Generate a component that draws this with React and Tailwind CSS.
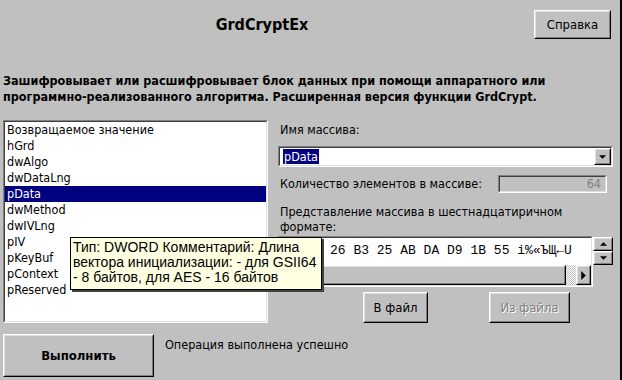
import React from 'react';

const ui = "font-['DejaVu_Sans_Condensed','DejaVu_Sans',sans-serif] font-stretch-condensed";

const raised = 'border border-t-white border-l-white border-b-black border-r-black';
const raisedInner = 'border border-t-[#dfdfdf] border-l-[#dfdfdf] border-b-[#808080] border-r-[#808080]';
const sunken = 'border border-t-[#808080] border-l-[#808080] border-b-white border-r-white';
const sunkenInner = 'border border-t-[#404040] border-l-[#404040] border-b-[#dfdfdf] border-r-[#dfdfdf]';

const items = [
    'Возвращаемое значение',
    'hGrd',
    'dwAlgo',
    'dwDataLng',
    'pData',
    'dwMethod',
    'dwIVLng',
    'pIV',
    'pKeyBuf',
    'pContext',
    'pReserved',
];

const Arrow = ({ dir = 'down', size = 7 }) => {
    const pts = {
        down: '0,0 6,0 3,3',
        up: '0,3 6,3 3,0',
        right: '0,0 0,8 4,4',
    }[dir];
    const vb = dir === 'right' ? '0 0 4 8' : '0 0 6 3';
    return (
        <svg width={dir === 'right' ? 5 : size} height={dir === 'right' ? 9 : 4} viewBox={vb}>
            <polygon points={pts} fill="#000" />
        </svg>
    );
};

const Button = ({ children, className = '', disabled, bold }) => (
    <div className={`${raised} ${className}`}>
        <div className={`${raisedInner} w-full h-full flex items-center justify-center bg-[#c0c0c0]`}>
            <span
                className={`${bold ? 'font-bold' : ''} ${
                    disabled ? 'text-[#808080] [text-shadow:1px_1px_0_#fff]' : 'text-black'
                }`}
            >
                {children}
            </span>
        </div>
    </div>
);

export default function App() {
    return (
        <div className={`w-[622px] h-[380px] bg-[#c0c0c0] border-r-2 border-black overflow-hidden relative text-[12.5px] text-black ${ui}`}>
            {/* шапка */}
            <div className="flex h-[50px] items-start pt-[10px]">
                <div className="flex-1 text-center pr-[10px] font-bold text-[16px] leading-[29px]">GrdCryptEx</div>
                <Button className="w-[77px] h-[29px] mr-[9px] text-[13px]">Справка</Button>
            </div>

            <div className="mt-[23px] px-[3px] font-bold text-[12.5px] leading-[16px]">
                Зашифровывает или расшифровывает блок данных при помощи аппаратного или
                <br />
                программно-реализованного алгоритма. Расширенная версия функции GrdCrypt.
            </div>

            <div className="flex mt-[15px] pl-[3px]">
                {/* список параметров */}
                <div className={`${sunken} w-[265px] h-[203px]`}>
                    <div className={`${sunkenInner} w-full h-full bg-white`}>
                        {items.map((it) => (
                            <div
                                key={it}
                                className={`h-[16px] leading-[16px] pl-[2px] ${
                                    it === 'pData' ? 'bg-[#000080] text-white' : ''
                                }`}
                            >
                                {it}
                            </div>
                        ))}
                    </div>
                </div>

                {/* правая панель */}
                <div className="ml-[10px] w-[335px] flex flex-col">
                    <div className="h-[16px] leading-[16px] mt-[2px] pl-[2px]">Имя массива:</div>

                    <div className={`${sunken} mt-[8px] h-[21px]`}>
                        <div className={`${sunkenInner} h-full bg-white flex items-center`}>
                            <span className="ml-[3px] bg-[#000080] text-white leading-[15px] px-[1px]">pData</span>
                            <div className={`${raised} ml-auto w-[17px] h-full border-black`}>
                                <div className={`${raisedInner} h-full flex items-center justify-center bg-[#c0c0c0]`}>
                                    <Arrow dir="down" />
                                </div>
                            </div>
                        </div>
                    </div>

                    <div className="flex items-center mt-[8px] h-[18px]">
                        <span className="pl-[2px]">Количество элементов в массиве:</span>
                        <div className={`${sunken} ml-auto mr-[6px] w-[109px] h-[18px]`}>
                            <div className={`${sunkenInner} h-full flex items-center justify-end pr-[4px] text-[#808080]`}>
                                64
                            </div>
                        </div>
                    </div>

                    <div className="mt-[11px] pl-[2px] leading-[15px]">
                        Представление массива в шестнадцатиричном
                        <br />
                        формате:
                    </div>

                    <div className="flex mt-[2px]">
                        <div className={`${sunken} w-[315px] h-[51px]`}>
                            <div className={`${sunkenInner} h-full flex flex-col`}>
                                <div className="flex-1 bg-white overflow-hidden whitespace-pre font-['Liberation_Mono',monospace] text-[13px] leading-[26px] pl-[50px]">
                                    {'26 B3 25 AB DA D9 1B 55 і%«ЪЩ←U'}
                                </div>
                                <div className="h-[20px] flex">
                                    <div className={`${raised} w-[15px] h-full`}>
                                        <div className={`${raisedInner} h-full bg-[#c0c0c0]`} />
                                    </div>
                                    <div className={`${raised} flex-1 h-full`}>
                                        <div className={`${raisedInner} h-full bg-[#c0c0c0]`} />
                                    </div>
                                    <div className="w-[10px] h-full bg-[repeating-conic-gradient(#c0c0c0_0%_25%,#ffffff_0%_50%)] bg-[length:2px_2px]" />
                                    <div className={`${raised} w-[15px] h-full`}>
                                        <div className={`${raisedInner} h-full bg-[#c0c0c0] flex items-center justify-center`}>
                                            <Arrow dir="right" />
                                        </div>
                                    </div>
                                </div>
                            </div>
                        </div>
                        <div className="flex flex-col pt-[1px]">
                            <div className={`${raised} w-[20px] h-[14px]`}>
                                <div className={`${raisedInner} h-full bg-[#c0c0c0] flex items-center justify-center`}>
                                    <Arrow dir="up" />
                                </div>
                            </div>
                            <div className={`${raised} w-[20px] h-[14px]`}>
                                <div className={`${raisedInner} h-full bg-[#c0c0c0] flex items-center justify-center`}>
                                    <Arrow dir="down" />
                                </div>
                            </div>
                        </div>
                    </div>

                    <div className="flex mt-[5px] text-[13px]">
                        <Button className="ml-[85px] w-[65px] h-[31px]">В файл</Button>
                        <Button className="ml-[61px] w-[81px] h-[31px]" disabled>
                            Из файла
                        </Button>
                    </div>
                </div>
            </div>

            {/* низ */}
            <div className="flex mt-[11px] pl-[3px]">
                <Button className="w-[151px] h-[43px] text-[13px]" bold>
                    Выполнить
                </Button>
                <div className="ml-[11px] mt-[3px] leading-[16px]">Операция выполнена успешно</div>
            </div>

            {/* подсказка */}
            <div className="absolute left-[70px] top-[237px] w-[252px] h-[53px] bg-[#ffffe1] border border-black shadow-[2px_2px_0_#404040] px-[2px] pt-[2px] whitespace-nowrap font-['Liberation_Sans',Arial,sans-serif] text-[14px] leading-[15px]">
                Тип: DWORD Комментарий: Длина
                <br />
                вектора инициализации: - для GSII64
                <br />- 8 байтов, для AES - 16 байтов
            </div>
        </div>
    );
}
